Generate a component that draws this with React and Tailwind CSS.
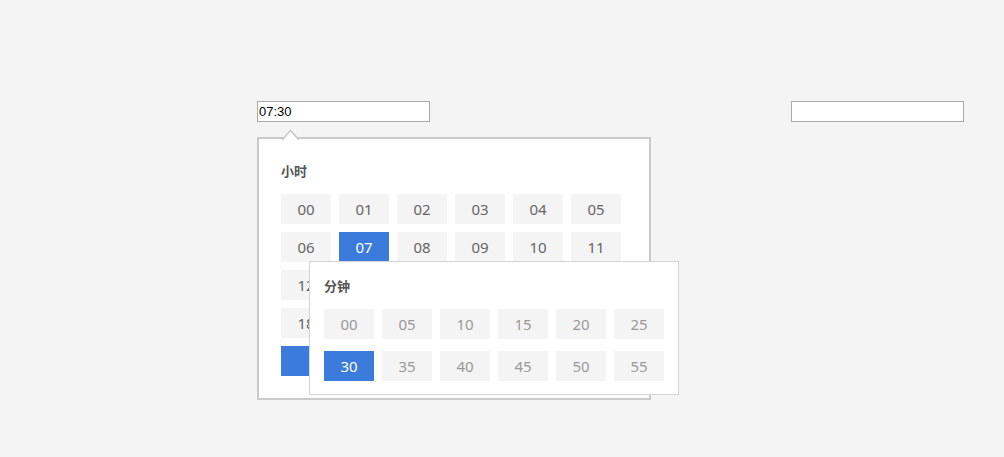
import React from "react";

const hours = [
  "00","01","02","03","04","05",
  "06","07","08","09","10","11",
  "12","13","14","15","16","17",
  "18","19","20","21","22","23",
];
const minutes = ["00","05","10","15","20","25","30","35","40","45","50","55"];

const font = { fontFamily: '"Noto Sans", "Noto Sans CJK SC", sans-serif' };

export default function App() {
  return (
    <div className="h-[457px] w-full bg-[#f4f4f4] pt-[101px] flex items-start" style={font}>
      <div className="relative ml-[257px]">
        <input
          readOnly
          value="07:30"
          className="block w-[173px] h-[21px] border border-[#a9a9a9] bg-white px-[1px] text-[13px] text-black outline-none"
          style={{ fontFamily: '"Liberation Sans", Arial, sans-serif' }}
        />
        <div className="absolute left-0 top-[36px] w-[394px] h-[263px] border-2 border-[#cacaca] bg-white px-[22px] pt-[22px] pb-[22px]">
          <svg className="absolute left-[23px] top-[-10px]" width="17" height="11" viewBox="0 0 17 11">
            <path d="M0 11 L8.5 1.5 L17 11" fill="white" stroke="#cacaca" strokeWidth="1.6" />
          </svg>
          <div className="text-[13px] leading-[20px] font-bold text-[#555] mb-[13px]">小时</div>
          <div className="grid grid-cols-[repeat(6,50px)] gap-[8px]">
            {hours.map((h) => (
              <div
                key={h}
                className={
                  h === "07"
                    ? "h-[30px] flex items-center justify-center bg-[#3a7bdb] text-white text-[15px]"
                    : "h-[30px] flex items-center justify-center bg-[#f4f4f4] text-[#666] text-[15px]"
                }
              >
                {h}
              </div>
            ))}
            <div className="h-[30px] bg-[#3a7bdb]"></div>
          </div>
        </div>
        <div className="absolute left-[52px] top-[160px] w-[370px] h-[134px] border border-[#d4d4d4] bg-white px-[14px] pt-[14px]">
          <div className="text-[13px] leading-[20px] font-bold text-[#555] mb-[13px]">分钟</div>
          <div className="grid grid-cols-[repeat(6,50px)] gap-x-[8px] gap-y-[12px]">
            {minutes.map((m) => (
              <div
                key={m}
                className={
                  m === "30"
                    ? "h-[30px] flex items-center justify-center bg-[#3a7bdb] text-white text-[15px]"
                    : "h-[30px] flex items-center justify-center bg-[#f4f4f4] text-[#999] text-[15px]"
                }
              >
                {m}
              </div>
            ))}
          </div>
        </div>
      </div>
      <input
        readOnly
        value=""
        className="block ml-[361px] w-[173px] h-[21px] border border-[#a9a9a9] bg-white outline-none"
      />
    </div>
  );
}
